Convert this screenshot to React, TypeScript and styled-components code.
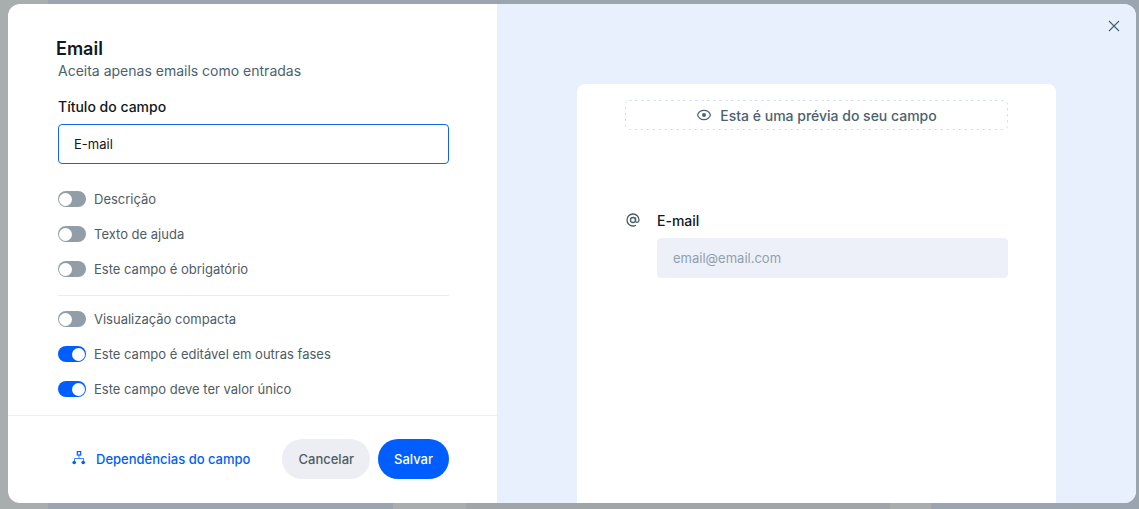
import React, { useId, useState } from "react";
import styled, { createGlobalStyle } from "styled-components";

const GlobalStyle = createGlobalStyle`
  *, *::before, *::after { box-sizing: border-box; }
  body {
    margin: 0;
    font-family: Inter, "Liberation Sans", sans-serif;
    font-size: 13px;
    line-height: 20px;
    color: #101820;
    background: #9ba5af;
  }
  button, input { font: inherit; }
`;

const Backdrop = styled.div`
  display: flex;
  min-height: 100vh;
  padding: 4px 3px 6px 8px;
  background:
    linear-gradient(#a8adae, #a8adae) 0 0 / 48px 100% no-repeat,
    linear-gradient(
      to right,
      #9ba5af 393px,
      #a8adae 393px 466px,
      #9fa5a8 466px 890px,
      #a8adae 890px 931px,
      #9ba5af 931px
    ) 0 100% / 100% 6px no-repeat,
    #9ba5af;
`;

const Dialog = styled.div`
  position: relative;
  flex: 1;
  display: grid;
  grid-template-columns: minmax(0, 489fr) minmax(0, 639fr);
  overflow: hidden;
  border-radius: 12px;
  background: #fff;
`;

const Settings = styled.form`
  display: flex;
  flex-direction: column;
`;

const SettingsBody = styled.div`
  flex: 1;
  padding: 33px 48px 16px 50px;
`;

const Title = styled.h1`
  margin: 0 0 0 -2px;
  font-size: 18px;
  font-weight: 600;
  line-height: 24px;
`;

const Subtitle = styled.p`
  margin: 0 0 16px;
  font-size: 14px;
  line-height: 20px;
  color: #4b626f;
`;

const FieldLabel = styled.label`
  display: block;
  font-size: 14px;
  font-weight: 500;
  line-height: 20px;
`;

const TextInput = styled.input<{ $filled?: boolean }>`
  display: block;
  width: 100%;
  height: 40px;
  margin-top: 7px;
  padding: 0 15px;
  border: 1px solid ${(p) => (p.$filled ? "#edf0f8" : "#1264e8")};
  border-radius: 4px;
  outline: none;
  color: #101820;
  background: ${(p) => (p.$filled ? "#edf0f8" : "#fff")};
  &::placeholder { color: #90a0ad; opacity: 1; }
`;

const SwitchGroup = styled.div`
  display: flex;
  flex-direction: column;
  gap: 15px;
  padding: 25px 0 16px;
  & + & {
    padding: 13px 0 0;
    border-top: 1px solid #ececef;
  }
`;

const SwitchRow = styled.label`
  display: flex;
  align-items: center;
  gap: 8px;
  height: 20px;
  color: #4e5c66;
  cursor: pointer;
`;

const SwitchInput = styled.input`
  appearance: none;
  display: flex;
  align-items: center;
  flex: none;
  width: 28px;
  height: 16px;
  margin: 0;
  padding: 0 1px;
  border-radius: 8px;
  background: #919ea8;
  cursor: pointer;
  &::before {
    content: "";
    width: 13px;
    height: 13px;
    border-radius: 50%;
    background: #fff;
  }
  &:checked { justify-content: flex-end; background: #005eff; }
`;

const Footer = styled.footer`
  display: flex;
  align-items: center;
  gap: 8px;
  padding: 23px 48px 24px 64px;
  border-top: 1px solid #edeff5;
`;

const DependenciesLink = styled.a`
  display: flex;
  align-items: center;
  gap: 10px;
  margin-right: auto;
  font-weight: 500;
  color: #005eff;
  text-decoration: none;
`;

const PillButton = styled.button<{ $primary?: boolean }>`
  height: 40px;
  padding: 0 16px;
  border: 0;
  border-radius: 20px;
  font-weight: 500;
  color: ${(p) => (p.$primary ? "#fff" : "#4e5c66")};
  background: ${(p) => (p.$primary ? "#005eff" : "#edeef3")};
  cursor: pointer;
`;

const Preview = styled.section`
  display: flex;
  padding: 80px 80px 0;
  background: #e8f0fe;
`;

const PreviewCard = styled.div`
  flex: 1;
  min-width: 0;
  padding: 16px 48px;
  border-radius: 8px 8px 0 0;
  background: #fff;
`;

const PreviewNotice = styled.div`
  position: relative;
  display: flex;
  align-items: center;
  justify-content: center;
  gap: 8px;
  height: 30px;
  padding-top: 2px;
  font-size: 14px;
  font-weight: 500;
  color: #4b626f;
`;

const DashedOutline = styled.svg`
  position: absolute;
  top: 0;
  left: 0;
  width: calc(100% - 1px);
  height: calc(100% - 1px);
  overflow: visible;
  pointer-events: none;
`;

const PreviewField = styled.div`
  display: grid;
  grid-template-columns: 16px minmax(0, 1fr);
  gap: 16px;
  margin-top: 81px;
  color: #4b5c68;
  & > svg { margin-top: 1px; }
`;

const PreviewLabel = styled(FieldLabel)`
  color: #101820;
`;

const CloseButton = styled.button`
  position: absolute;
  top: 14px;
  right: 14px;
  display: flex;
  padding: 0;
  border: 0;
  color: #44606e;
  background: none;
  cursor: pointer;
`;

const EyeIcon = () => (
  <svg width="16" height="16" viewBox="0 0 16 16" fill="none" aria-hidden="true">
    <path d="M1.500 7C2.500 4.200 5 2.400 8 2.400S13.500 4.200 14.500 7C13.500 9.800 11 11.600 8 11.600S2.500 9.800 1.500 7Z" stroke="currentColor" strokeWidth="1.1" />
    <circle cx="8" cy="7" r="2" fill="currentColor" />
  </svg>
);

const AtIcon = () => (
  <svg width="16" height="16" viewBox="0 0 16 16" fill="none" stroke="currentColor" strokeWidth="1.3" aria-hidden="true">
    <circle cx="8" cy="8" r="2.500" />
    <path d="M10.500 5.400v3.400c0 2.300 3.500 2.200 3.500-.8C14 4.500 11.400 2 8 2S2 4.600 2 8s2.700 6 6 6c1.200 0 2.200-.3 3-.8" />
  </svg>
);

const TreeIcon = () => (
  <svg width="14" height="16" viewBox="0 0 14 16" fill="none" stroke="currentColor" aria-hidden="true">
    <rect x="5.300" y="0.600" width="3.400" height="3.400" strokeWidth="1.200" />
    <path d="M7 4v3.500M2.500 10V7.500h9V10" opacity=".75" />
    <circle cx="2.200" cy="11.500" r="1.800" fill="currentColor" stroke="none" />
    <circle cx="11.200" cy="11.500" r="1.800" fill="currentColor" stroke="none" />
  </svg>
);

const CloseIcon = () => (
  <svg width="16" height="16" viewBox="0 0 16 16" fill="none" stroke="currentColor" strokeWidth="1.1" aria-hidden="true">
    <path d="M3 3l10 10M13 3L3 13" />
  </svg>
);

function Switch({ label, on = false }: { label: string; on?: boolean }) {
  return (
    <SwitchRow>
      <SwitchInput type="checkbox" role="switch" defaultChecked={on} />
      {label}
    </SwitchRow>
  );
}

export default function App() {
  const id = useId();
  const [title, setTitle] = useState("E-mail");

  return (
    <>
      <GlobalStyle />
      <Backdrop>
        <Dialog role="dialog" aria-labelledby={`${id}-heading`}>
          <Settings onSubmit={(e: React.FormEvent) => e.preventDefault()}>
            <SettingsBody>
              <Title id={`${id}-heading`}>Email</Title>
              <Subtitle>Aceita apenas emails como entradas</Subtitle>
              <FieldLabel htmlFor={`${id}-title`}>Título do campo</FieldLabel>
              <TextInput
                id={`${id}-title`}
                value={title}
                onChange={(e: React.ChangeEvent<HTMLInputElement>) => setTitle(e.target.value)}
              />
              <SwitchGroup>
                <Switch label="Descrição" />
                <Switch label="Texto de ajuda" />
                <Switch label="Este campo é obrigatório" />
              </SwitchGroup>
              <SwitchGroup>
                <Switch label="Visualização compacta" />
                <Switch label="Este campo é editável em outras fases" on />
                <Switch label="Este campo deve ter valor único" on />
              </SwitchGroup>
            </SettingsBody>
            <Footer>
              <DependenciesLink href="#dependencias">
                <TreeIcon />
                Dependências do campo
              </DependenciesLink>
              <PillButton type="button">Cancelar</PillButton>
              <PillButton type="submit" $primary>Salvar</PillButton>
            </Footer>
          </Settings>
          <Preview>
            <PreviewCard>
              <PreviewNotice>
                <DashedOutline aria-hidden="true">
                  <rect
                    x="0.5"
                    y="0.5"
                    width="100%"
                    height="100%"
                    rx="4"
                    fill="none"
                    stroke="#c6dcec"
                    strokeDasharray="2 4"
                  />
                </DashedOutline>
                <EyeIcon />
                Esta é uma prévia do seu campo
              </PreviewNotice>
              <PreviewField>
                <AtIcon />
                <div>
                  <PreviewLabel htmlFor={`${id}-preview`}>{title}</PreviewLabel>
                  <TextInput id={`${id}-preview`} type="email" placeholder="email@email.com" $filled />
                </div>
              </PreviewField>
            </PreviewCard>
          </Preview>
          <CloseButton type="button" aria-label="Fechar">
            <CloseIcon />
          </CloseButton>
        </Dialog>
      </Backdrop>
    </>
  );
}
